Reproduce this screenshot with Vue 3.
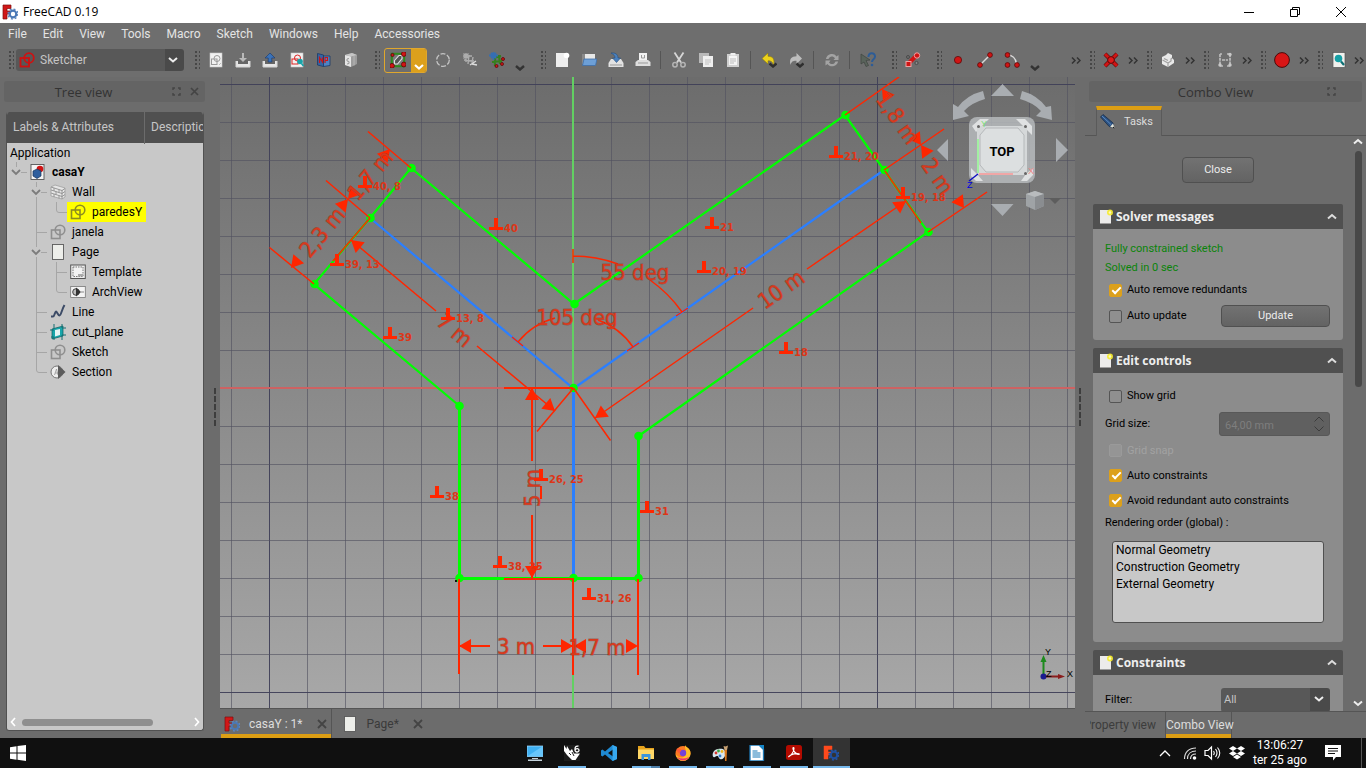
<script setup>
import { ref } from 'vue'

const dot = (x, y, r = 2.4) => `<circle cx="${x}" cy="${y}" r="${r}" fill="#d01414" stroke="#5a0a0a" stroke-width=".8"/>`
const chev = '<path d="M8.5 11.5l3.5 3 3.500-3" fill="none" stroke="#2e2e2e" stroke-width="2.400"/>'
const gear = (c, s) => `<circle cx="11" cy="10" r="3.300" fill="none" stroke="${c}" stroke-width="2.200"/><circle cx="11" cy="10" r="4.900" fill="none" stroke="${s}" stroke-width="1.500" stroke-dasharray="1.900 1.950"/>`
const sketchShape = (c, w = 1.6) => `<rect x="1.500" y="6" width="8.500" height="8.500" fill="none" stroke="${c}" stroke-width="${w}"/><circle cx="10" cy="6" r="4.800" fill="none" stroke="${c}" stroke-width="${w}"/>`
const paper = '<rect x="2" y="1" width="12" height="14" fill="#f1f1f1" stroke="#c9c9c9" stroke-width=".6"/>'
const tray = '<path d="M1 9v6h14V9" fill="#e6e6e6" stroke="#d5d5d5"/><path d="M3 8h10v4H3z" fill="#666"/>'

const icons = {
  freecad: `<path d="M1 1h8v3.500H5V7h3v3H5v5H1z" fill="#d11717" stroke="#7d0d0d" stroke-width=".7"/>${gear('#4a78b5', '#5c86bd')}`,
  freecadBar: `<path d="M1 1h8v3.500H5V7h3v3H5v4H1z" fill="#ff4a1c" stroke="#ff4a1c" stroke-width=".5"/>${gear('#1f4fa0', '#2456a8')}`,
  sketcher: sketchShape('#cf1111', 1.8),
  sketch: sketchShape('#8f8f8f'),
  sketchY: sketchShape('#8d8d20'),
  newSketch: `${paper}<rect x="3.500" y="7" width="5.500" height="5.500" fill="none" stroke="#999"/><circle cx="9" cy="6.500" r="3" fill="none" stroke="#999"/><path d="M11 13l2-2" stroke="#bbb"/>`,
  trayDown: `${tray}<path d="M7 1h2v5h3l-4 4-4-4h3z" fill="#b9b9b9"/>`,
  trayUp: `${tray}<path d="M6.200 10V6H3l5-5 5 5H9.800v4z" fill="#3a72b8" stroke="#1f3e70" stroke-width=".7"/>`,
  viewSketch: `${paper}<rect x="3" y="7" width="6" height="5" fill="none" stroke="#d22"/><circle cx="8.500" cy="6" r="3" fill="none" stroke="#d22"/><circle cx="11" cy="9.500" r="2.800" fill="#19a3a8"/><path d="M12.500 11.500l2 2.500" stroke="#19a3a8" stroke-width="1.800"/>`,
  viewSection: '<path d="M1.500 1.500l6 1.500v11.500l-6-1.500z" fill="#3465a4" stroke="#1c3a68" stroke-width=".8"/><path d="M7.500 4h6.500v9.500l-6.500 1z" fill="#4d83c4" stroke="#1c3a68" stroke-width=".8"/><path d="M3.500 11V5.500l3 4.500V5.500M9 11V5.500h2.500v3H9" stroke="#cf1414" stroke-width="1.200" fill="none"/>',
  mapSketch: '<path d="M2 3l7-2 5 2v9l-6 3-6-2z" fill="#9c9c9c"/><path d="M2 3l6 1.500V15l-6-2z" fill="#e5e5e5"/><path d="M2 3l7-2 5 2-6 1.500z" fill="#c6c6c6"/><path d="M11 4v9.500" stroke="#b5b5b5"/><path d="M6 6.500l-2 .5v2l2 .5v2l-2 .5" stroke="#999" fill="none"/>',
  boundary: `<rect x="1.800" y="1.800" width="12.400" height="12.400" fill="#7a7a7a" stroke="#2f8a1e" stroke-width="2"/><path d="M4.500 8.500L9 3.500h3v3L7.500 12h-3z" fill="#555" stroke="#e0e0e0" stroke-width="1.100"/>${dot(2, 13.800)}${dot(13.800, 2)}${dot(13.800, 12.500)}${dot(2.500, 3, 1.600)}`,
  dashCircle: '<circle cx="8" cy="8" r="6.300" fill="none" stroke="#c4c4c4" stroke-width="1.300" stroke-dasharray="5 1.600"/>',
  hashGrey: '<path d="M4 1v9M1 4h9M7 3l-1 9M2 8l10 1M11 5l-1 6M1.500 1.500l5 5M6.500 1.500l-5 5" stroke="#adadad" stroke-width="1.400" fill="none"/><path d="M8 13l6-4M10 12l5 1" stroke="#dcdcdc" stroke-width="1.300"/>',
  hashColor: '<path d="M4 6l8-2M3 10l10-1M6 3v11M10 3l1 9" stroke="#36801d" stroke-width="2.200"/><path d="M4.500 0v8M0 3.500h9M2 1l5 5M7 1L2 6" stroke="#356eb2" stroke-width="1.800"/>' + dot(14, 7, 1.500) + dot(13, 12, 1.500) + dot(7.500, 14, 1.500),
  newDoc: '<path d="M2 1h12v14H2z" fill="#eee"/><circle cx="12.500" cy="3.500" r="2.800" fill="#fff"/>',
  open: '<path d="M1 2h4l1 1h8v9H1z" fill="#8a8a8a"/><path d="M4 2h10v6H4z" fill="#e8e8e8"/><path d="M3 7h13l-1.500 6.500H1.500z" fill="#6d9fd6" stroke="#3f6fa8" stroke-width=".8"/>',
  save: '<path d="M3 7h10l2.500 4v4H.5v-4z" fill="#e2e2e2"/><path d="M2 13h12" stroke="#999"/><path d="M3 1c4-.5 7 1 7 5h2.500L8.500 10.500 4.500 6H7c0-2-1-3.500-4-5z" fill="#4a80bd" stroke="#274f80" stroke-width=".6"/>',
  print: '<path d="M4 1h8v7H4z" fill="#f1f1f1"/><path d="M3 8h10l2.500 2v4H.5v-4z" fill="#dedede"/><path d="M6.500 3v3h3V3M3 11h10" stroke="#999" fill="none"/>',
  cut: '<path d="M3.500 0.500l6.500 10M12.500.5L6 10.500" stroke="#d6d6d6" stroke-width="1.800"/><circle cx="4" cy="12.800" r="2.200" fill="none" stroke="#b5b5b5" stroke-width="1.500"/><circle cx="12" cy="12.800" r="2.200" fill="none" stroke="#b5b5b5" stroke-width="1.500"/>',
  copy: '<path d="M1 1h10v10H1z" fill="#b9b9b9"/><path d="M5 4h10v11H5z" fill="#efefef"/><path d="M7 8h6M7 10h6M7 12h4" stroke="#c2c2c2"/>',
  paste: '<path d="M2 2h12v13H2z" fill="#cfcfcf"/><path d="M4 4h8v9H4z" fill="#f4f4f4"/><path d="M5.500 1h5v2.500h-5z" fill="#eee"/><path d="M5 7h6M5 9h6M5 11h4" stroke="#bbb"/>',
  undo: '<path d="M1 6.500L7 1v3.300c5 0 7 3 5.500 9C11.500 9.500 10 8.700 7 8.800V12z" fill="#ecd21c" stroke="#8f7b00" stroke-width=".5"/>' + chev,
  redo: '<path d="M14 6.500L8.500 1v3.300C3.500 4.300 1 7 2.500 13 3.500 9.500 5 8.700 8.500 8.800V12z" fill="#bdbdbd"/>' + chev,
  refresh: '<path d="M2 7c.5-5 8-7 10.500-2.500L14.500 3v5H9.500l1.500-1.800C9 3.500 5.500 4 4.500 7zM14 9.500c-.5 5-8 6.500-10.500 2.500L1.500 13.500v-5h5L5 10.500c2 2.500 5.500 2 6.500-1z" fill="#a3a3a3"/>',
  whatsThis: '<path d="M1 2l9 6-4 .5 2.500 5L6 14.500 4 10l-3 2z" fill="#59635b" stroke="#3f4540" stroke-width=".7"/><path d="M8.500 5c0-5 6.500-5 6.500-.5 0 3-3 2.500-3 5.500" fill="none" stroke="#2d5c96" stroke-width="2"/><circle cx="12" cy="13" r="1.300" fill="#2d5c96"/>',
  constr: '<path d="M3 12l9-9" stroke="#d01414" stroke-width="4"/><rect x="1" y="9.500" width="5" height="5" fill="#d01414" stroke="#f0a0a0"/><circle cx="12" cy="3.500" r="2.700" fill="#d01414" stroke="#f0a0a0"/><circle cx="3" cy="5" r="1.500" fill="none" stroke="#4a4a4a"/><circle cx="11.500" cy="11" r="1.600" fill="#8a8a8a" stroke="#4a4a4a"/>',
  point: dot(8, 8, 3.600),
  line: '<path d="M3 13L13 3" stroke="#d9d9d9" stroke-width="1.500"/>' + dot(3, 13) + dot(13, 3),
  arc: '<path d="M3 3c5 0 9 3 9.500 9" fill="none" stroke="#d9d9d9" stroke-width="1.500"/>' + dot(3.500, 3) + dot(3.500, 13) + dot(13, 13),
  cross: '<path d="M2 2l12 12M14 2L2 14" stroke="#5a0a0a" stroke-width="4.200"/><path d="M2 2l12 12M14 2L2 14" stroke="#d01414" stroke-width="3"/><circle cx="8" cy="8" r="3.400" fill="#e01818" stroke="#5a0a0a"/>',
  solid: '<path d="M2 5l4-2 2-2 4 2v3l2 2v3l-6 4-6-3z" fill="#e9e9e9"/><path d="M8 15v-4l3-2V7l1-1M8 11L2.500 8M8 8.500L4 6.500" stroke="#a0a0a0" fill="none" stroke-width="1.200"/>',
  frame: '<path d="M3 2v12M13 2v12M3 14h3M10 14h3M3 2h2M10 2h3M5 8h6" stroke="#bdbdbd" stroke-width="1.700" fill="none" stroke-dasharray="3 .8"/><circle cx="3" cy="13" r="1.700" fill="#c8c8c8"/><circle cx="13" cy="2.500" r="1.700" fill="#c8c8c8"/><circle cx="13" cy="13" r="1.700" fill="#c8c8c8"/>',
  record: '<circle cx="8" cy="8" r="7.400" fill="#d81616" stroke="#3d0606" stroke-width=".9"/>',
  zoomDoc: '<rect x="2" y=".5" width="12" height="15" fill="#f1f1ee" stroke="#555" stroke-width=".7"/><circle cx="7.500" cy="6.500" r="3.800" fill="#16a0a6"/><path d="M10 9.500l3 3.500" stroke="#0d6f74" stroke-width="2.200"/>',
  docRoot: '<rect x="1" y=".5" width="13" height="15" fill="#f4f4f4" stroke="#555" stroke-width=".9"/><circle cx="10" cy="5" r="3.300" fill="#d01414"/><path d="M3 7l4-2 4 2v5l-4 2.500L3 12z" fill="#2f5f9e" stroke="#1a3458" stroke-width=".7"/>',
  wall: '<path d="M1 3l4-2 10 3v9l-3 2L1 12z" fill="#e6e6e6" stroke="#999" stroke-width=".7"/><path d="M1 6l11 3.500 3-2M1 9l11 3.500 3-2M1 3l11 3.500 3-2M4 4v3M9 5.500v3M6 7.500v3M4 10v3M9 11.500v3M12 6v9" stroke="#8f8f8f" stroke-width=".9" fill="none"/>',
  page: '<rect x="2.500" y=".5" width="11" height="15" fill="#edeeea" stroke="#5a5a5a" stroke-width=".9"/>',
  template: '<rect x=".7" y="1" width="14.600" height="13.500" fill="#ededed" stroke="#555"/><rect x="3" y="3" width="10" height="9.500" fill="#f2f2f2" stroke="#777" stroke-dasharray="1.500 1"/><path d="M8 10h5v2.500H8z" fill="#aaa"/>',
  archview: '<rect x=".7" y="2.500" width="14.600" height="11" fill="#f4f4f4" stroke="#777" stroke-width=".8"/><circle cx="6" cy="8" r="3.300" fill="#bbb" stroke="#444"/><path d="M6 3.500L11 8l-5 4.500z" fill="#333"/><path d="M11 8h3" stroke="#888"/>',
  polyline: '<path d="M1 12.500h2c1.500 0 2-5 3-5s2 4 3.500 4S12 5 14.500 1" fill="none" stroke="#3c4b66" stroke-width="2"/>',
  cutplane: '<path d="M2 5l11-3v10L2 15z" fill="#17a5aa" stroke="#0a5d60" stroke-width=".7"/><path d="M5 6l5-1v6l-5 1.500z" fill="#e4f4f4"/><path d="M0 6h4M12 4h4M1 13h3M12 11h4M4 0v5M12 0v4M4 13v3M12 11v5" stroke="#146e72" stroke-width="1"/>',
  section: '<circle cx="7" cy="8" r="6" fill="#eee" stroke="#777"/><path d="M4.500 11L6.500 5l1.500 6M5 9h3" stroke="#999" fill="none" stroke-width=".8"/><path d="M8 1l7.500 7L8 15z" fill="#5c5c5c"/>',
  pencil: '<path d="M.5 3L3 .5l10 8.500.8 4.500-4.600-1z" fill="#2c5282" stroke="#162d4d" stroke-width=".8"/><path d="M2 2l9 8.500" stroke="#5b8bc4"/><path d="M13 9.500l1.800 4.800-4.600-1.500z" fill="#e4e4d8"/><path d="M13.500 12.500l1.500 2-2.300-.8z" fill="#111"/>',
  star: '<path d="M2 1h11v13.500H2z" fill="#ecebea"/><circle cx="12" cy="3.500" r="3" fill="#f6ec2c" opacity=".9"/><circle cx="12" cy="3.500" r="1.300" fill="#fffbb8"/>',
  pc: '<rect x="0" y="1" width="16" height="10.500" fill="#3fb0f2" stroke="#aee0ff" stroke-width=".7"/><path d="M0 11.500L16 1v10.500z" fill="#68c6fb"/><path d="M5 13h6v1H5zM1 14.500h14V16H1z" fill="#c5d3dc"/>',
  rhino: '<rect x="0" y="0" width="16" height="16" fill="#1c1c1c"/><path d="M0 0l2.500 4 .5-3 3 5 2-2 2 4.500h6L11.500 15H8L3 10 0 6V0z" fill="#fff"/><path d="M5 8l2 2M8 7l2 4" stroke="#222"/><path d="M14.500 1.200c-3-.6-3.600 1.500-3.500 3.600 0 3 4 2.700 4 .5 0-2-3-2.200-3.800-.5" fill="none" stroke="#fff" stroke-width="1.300"/>',
  vscode: '<path d="M11.500 0L16 2v12l-4.500 2L4 9.500 1.500 11.500 0 10.500v-5l1.500-1L4 6.500zM12 4.500L7 8l5 3.500z" fill="#1f8ad2" fill-rule="evenodd"/><path d="M11.500 0L16 2v12l-4.500 2z" fill="#37a9f0"/>',
  explorer: '<path d="M0 1h6l1.500 2H16v11H0z" fill="#e6a21c"/><path d="M0 4.500h16V14H0z" fill="#ffd867"/><path d="M3.500 15V9h9v6H10v-3H6v3z" fill="#3d96dc"/>',
  firefox: '<circle cx="8" cy="8.500" r="7.500" fill="#ff7a22"/><path d="M10 0c1 3 6 3 5.500 9-.5 4-4 7-7.500 7S1 13 .5 9C3 13 8 14 10.500 10c2-4-1-5-.5-10z" fill="#ffbf26"/><path d="M2 12c3 5 10 4 12 0-4 2-8 2-12 0z" fill="#f0336b"/><circle cx="8" cy="8" r="3.200" fill="#7542d8"/><path d="M1.500 4c2-1 4-.5 5 1l-2 3c-2-.5-3-2-3-4z" fill="#ff5a36"/>',
  paint: '<path d="M6 4c5-1 8 1 7.500 5S10 15 8 14s-1-3-3-3-2 2-3.500 1S0 5 6 4z" fill="#d8e6ee"/><circle cx="4" cy="8" r="1.400" fill="#d93a2f"/><circle cx="6.500" cy="6" r="1.400" fill="#3aa83e"/><circle cx="10" cy="6.500" r="1.400" fill="#edb721"/><circle cx="8" cy="11" r="1.400" fill="#2f7bd3"/><path d="M12.500 5h2.500l-.5 11h-1.500z" fill="#d9781d"/><path d="M11.500 1l2 .5 2.500-1-1 4.500h-2.500z" fill="#c9a274"/>',
  writer: '<path d="M1 0h9l4.500 4.500V16H1z" fill="#fff" stroke="#1e78b4" stroke-width="1.300"/><path d="M10 0h5v5z" fill="#1586c8"/><path d="M3.500 6h5M3.500 8h8M3.500 10h8M3.500 12h8" stroke="#1778b8" stroke-width="1.100"/>',
  acrobat: '<rect x="0" y="0" width="16" height="15" rx="2.500" fill="#b30b00"/><path d="M3 11.500c2-1 5-5 5-8 0-1.500-1.500-1-1 .5.500 2 3 5.500 6 5.500 1.500-1-4-1.500-8 .5-2 1-3 2.500-2 1.500z" fill="none" stroke="#fff" stroke-width="1.100"/>'
}

const menus = ['File', 'Edit', 'View', 'Tools', 'Macro', 'Sketch', 'Windows', 'Help', 'Accessories']

const tools = [
  { k: 'handle' }, { i: 'newSketch' }, { i: 'trayDown' }, { i: 'trayUp' }, { i: 'viewSketch' }, { i: 'viewSection' }, { i: 'mapSketch' },
  { k: 'handle' }, { k: 'split', i: 'boundary' }, { i: 'dashCircle' }, { i: 'hashGrey' }, { i: 'hashColor' }, { k: 'more' },
  { k: 'handle' }, { i: 'newDoc' }, { i: 'open' }, { i: 'save' }, { i: 'print' }, { k: 'sep' }, { i: 'cut' }, { i: 'copy' }, { i: 'paste' },
  { k: 'sep' }, { i: 'undo' }, { i: 'redo' }, { k: 'sep' }, { i: 'refresh' }, { k: 'sep' }, { i: 'whatsThis' },
  { k: 'handle' }, { i: 'constr' }, { k: 'handle' }, { i: 'point' }, { i: 'line' }, { i: 'arc' }, { k: 'more' },
  { k: 'space' }, { k: 'ext' }, { k: 'tight' }, { i: 'cross' }, { k: 'ext' }, { k: 'tight' }, { i: 'solid' }, { k: 'ext' }, { k: 'tight' },
  { i: 'frame' }, { k: 'ext' }, { k: 'tight' }, { i: 'record' }, { k: 'ext' }, { k: 'tight' }, { i: 'zoomDoc' }, { k: 'ext' }
]

const tree = [
  { t: 'casaY', i: 'docRoot', w: 21, b: true, g: 'M10.500 0V5M15 10.500H21', c: 10 },
  { t: 'Wall', i: 'wall', w: 41, g: 'M30.500 0V5M30.500 15V20M35 10.500H41', c: 30 },
  { t: 'paredesY', i: 'sketchY', w: 61, sel: true, g: 'M30.500 0V20M50.500 0V8Q50.500 10.500 53 10.500H61' },
  { t: 'janela', i: 'sketch', w: 41, g: 'M30.500 0V20M30.500 10.500H41' },
  { t: 'Page', i: 'page', w: 41, g: 'M30.500 0V5M30.500 15V20M35 10.500H41', c: 30 },
  { t: 'Template', i: 'template', w: 61, g: 'M30.500 0V20M50.500 0V20M50.500 10.500H61' },
  { t: 'ArchView', i: 'archview', w: 61, g: 'M30.500 0V20M50.500 0V8Q50.500 10.500 53 10.500H61' },
  { t: 'Line', i: 'polyline', w: 41, g: 'M30.500 0V20M30.500 10.500H41' },
  { t: 'cut_plane', i: 'cutplane', w: 41, g: 'M30.500 0V20M30.500 10.500H41' },
  { t: 'Sketch', i: 'sketch', w: 41, g: 'M30.500 0V20M30.500 10.500H41' },
  { t: 'Section', i: 'section', w: 41, g: 'M30.500 0V8Q30.500 10.500 33 10.500H41' }
]

const gridX = Array.from({ length: 23 }, (_, n) => ({ p: 231.5 + n * 38, major: n === 1 || n === 17 }))
const gridY = Array.from({ length: 17 }, (_, n) => ({ p: 84.5 + n * 38, major: n === 0 || n === 16 }))

const nodes = [
  [411, 168], [370, 218], [314, 284], [574, 304], [573, 388], [459, 406], [459, 578],
  [573, 578], [638, 578], [638, 436], [928, 232], [884, 170], [845, 115]
]

const perps = [
  [489, 227, '40'], [358, 185, '40, 8'], [330, 263, '39, 13'], [441, 317, '13, 8'], [383, 336, '39'],
  [829, 155, '21, 20'], [705, 226, '21'], [697, 270, '20, 19'], [896, 196, '19, 18'], [779, 351, '18'],
  [430, 495, '38'], [534, 478, '26, 25'], [640, 510, '31'], [493, 565, '38, 25'], [582, 597, '31, 26']
]

/* arrow tips: x, y, direction in degrees */
const arrows = [
  [459, 646, 180], [573, 646, 0], [574, 646, 180], [638, 646, 0], [532, 388, -90], [532, 578, 90],
  [351, 240, 220], [555, 411, 40], [906, 201, -35], [595, 418, 145],
  [291, 268, 130], [348, 199, -50], [348, 199, 130], [390, 149, -50],
  [882, 89, 235], [921, 145, 55], [921, 145, 235], [964, 208, 55]
]

const dims = [
  [516, 646, 0, '3 m'], [597, 647, 0, '1,7 m'], [532, 488, -90, '5 m'], [455, 330, 40, '7 m'],
  [781, 289, -35, '10 m'], [322, 232, -50, '2,3 m'], [370, 175, -50, '1,7 m'],
  [898, 118, 55, '1,8 m'], [938, 176, 55, '2 m'], [577, 317, 0, '105 deg'], [635, 272, 0, '55 deg']
]

const autoRemove = ref(true)
const autoUpdate = ref(false)
const showGrid = ref(false)
const autoConstraints = ref(true)
const avoidRedundant = ref(true)

const apps = [
  { i: 'pc' }, { i: 'rhino', on: true }, { i: 'vscode' }, { i: 'explorer', on: true, multi: true }, { i: 'firefox', on: true },
  { i: 'paint', on: true }, { i: 'writer', on: true }, { i: 'acrobat', on: true }, { i: 'freecadBar', active: true }
]
</script>

<template>
  <div class="window">
    <header class="titlebar">
      <svg class="ic" viewBox="0 0 16 16" v-html="icons.freecad"></svg>
      <span class="apptitle">FreeCAD 0.19</span>
      <button class="winbtn" aria-label="Minimize"><svg width="12" height="12"><path d="M1 6.500h10" stroke="#000" /></svg></button>
      <button class="winbtn" aria-label="Restore"><svg width="12" height="12"><path d="M1.500 3.500h7v7h-7zM3.500 3.500v-2h7v7h-2" fill="none" stroke="#000" /></svg></button>
      <button class="winbtn" aria-label="Close window"><svg width="12" height="12"><path d="M1 1l10 10M11 1L1 11" stroke="#000" /></svg></button>
    </header>

    <nav class="menubar">
      <button v-for="m in menus" :key="m">{{ m }}</button>
    </nav>

    <div class="toolbar">
      <i class="dots"></i>
      <div class="workbench">
        <svg class="ic" viewBox="0 0 16 16" v-html="icons.sketcher"></svg>
        <select aria-label="Workbench"><option>Sketcher</option></select>
        <svg class="arrow" width="10" height="6"><path d="M1 1l4 3.500L9 1" fill="none" stroke="#eee" stroke-width="2" /></svg>
      </div>
      <template v-for="(t, n) in tools" :key="n">
        <span v-if="t.k === 'handle' || t.k === 'tight'" :class="['cell', t.k]"><i class="dots"></i></span>
        <i v-else-if="t.k === 'sep'" class="sep"></i>
        <i v-else-if="t.k === 'space'" class="space"></i>
        <button v-else-if="t.k === 'more'" class="more" aria-label="More"><svg width="10" height="6"><path d="M1 1l4 3.500L9 1" fill="none" stroke="#333" stroke-width="2.400" /></svg></button>
        <button v-else-if="t.k === 'ext'" class="ext" aria-label="Extend toolbar"><svg width="10" height="7"><path d="M1 .5l3 3-3 3M6 .5l3 3-3 3" fill="none" stroke="#333" stroke-width="1.500" /></svg></button>
        <button v-else-if="t.k === 'split'" class="split" aria-label="Validate">
          <span><svg class="ic" viewBox="0 0 16 16" v-html="icons[t.i]"></svg></span>
          <b><svg width="10" height="6"><path d="M1 1l4 3.500L9 1" fill="none" stroke="#fff" stroke-width="2.200" /></svg></b>
        </button>
        <button v-else class="tool" :aria-label="t.i"><svg class="ic" viewBox="0 0 16 16" v-html="icons[t.i]"></svg></button>
      </template>
    </div>

    <main class="workspace">
      <aside class="leftdock">
        <div class="docktitle">
          <span>Tree view</span>
          <svg width="9" height="9"><path d="M1 3V1h2M6 1h2v2M8 6v2H6M3 8H1V6" fill="none" stroke="#444" stroke-width="1.400" /></svg>
          <svg width="9" height="9"><path d="M1 1l7 7M8 1L1 8" stroke="#444" stroke-width="1.700" /></svg>
        </div>
        <div class="treebox">
          <div class="treehead"><span>Labels &amp; Attributes</span><span>Description</span></div>
          <ul class="tree">
            <li class="root">Application</li>
            <li v-for="r in tree" :key="r.t">
              <svg class="guide" :width="r.w" height="20">
                <path :d="r.g" fill="none" stroke="#a6a6a6" />
                <path v-if="r.c" :d="`M${r.c - 4} 8l4 4 4-4`" fill="none" stroke="#7c7c7c" stroke-width="1.800" />
              </svg>
              <span :class="['node', { sel: r.sel, bold: r.b }]"><svg class="ic" viewBox="0 0 16 16" v-html="icons[r.i]"></svg>{{ r.t }}</span>
            </li>
          </ul>
          <div class="hscroll">
            <svg width="6" height="10"><path d="M5 1L1.500 5 5 9" fill="none" stroke="#fff" stroke-width="1.700" /></svg>
            <div class="track"><i></i></div>
            <svg width="6" height="10"><path d="M1 1l3.500 4L1 9" fill="none" stroke="#fff" stroke-width="1.700" /></svg>
          </div>
        </div>
        <i class="grip"></i>
      </aside>

      <section class="center">
        <svg class="canvas" viewBox="220 77 855 631" preserveAspectRatio="xMidYMid slice">
          <g shape-rendering="crispEdges">
            <line v-for="g in gridX" :key="'x' + g.p" :x1="g.p" :x2="g.p" y1="77" y2="708" :class="g.major ? 'major' : 'minor'" />
            <line v-for="g in gridY" :key="'y' + g.p" x1="220" x2="1075" :y1="g.p" :y2="g.p" :class="g.major ? 'major' : 'minor'" />
            <path d="M220 388H1075" stroke="#cd6262" stroke-width="2" />
            <path d="M573 77V708" stroke="#62d062" stroke-width="2" />
          </g>

          <g class="blue">
            <path d="M370 218L573.500 388.500L884 170" stroke-width="2.200" />
            <path d="M573.500 388V578" stroke-width="3" />
          </g>
          <g class="green">
            <path d="M459.500 406L314 284L370 218L411 168L574 304L845 115L884 170L928 232L638.500 436" stroke-width="2.200" />
            <path d="M459.500 406V578.500H638.500V436" stroke-width="3" />
          </g>
          <circle v-for="(p, n) in nodes" :key="'n' + n" :cx="p[0] + .5" :cy="p[1]" r="4.300" fill="#00ff00" />
          <rect x="455" y="580" width="2" height="2" fill="#111" />

          <g class="red" stroke-width="1.500">
            <path d="M411 168L368 131.500M370 218L326 180.500M314 284L269.500 247.500M845 115L899 77M884 170L944 129M928 232L987 192" />
            <path d="M370 218L333 261M573.500 388L537 431.500M885 171L921 223M573.500 388L610.500 440.500" />
            <path d="M351 240L436 311M477 346L555 411M906 201L807 269M753 308L595 418" />
            <path d="M573 256A132 132 0 0 1 618 264M650 280A132 132 0 0 1 682 312M573 249V263M676 316L688 308" />
            <path d="M518 342A72 72 0 0 1 555 318M598 320A72 72 0 0 1 633 347M512 337L523 346M627 351L639 343" />
          </g>
          <g class="red" stroke-width="2" shape-rendering="crispEdges">
            <path d="M459 579V674M573 578V675M638 579V675M504 388H573M504 579H573M532 389V461M532 515V578M460 646H490M543 646H573" />
            <path d="M541 486V499" />
          </g>
          <path v-for="(a, n) in arrows" :key="'a' + n" d="M0 0L-12 -7V7Z" fill="#ff2600" :transform="`translate(${a[0]} ${a[1]}) rotate(${a[2]})`" />
          <text v-for="(d, n) in dims" :key="'d' + n" class="dim" :transform="`translate(${d[0]} ${d[1]}) rotate(${d[2]})`" y="8">{{ d[3] }}</text>
          <g v-for="(p, n) in perps" :key="'p' + n" :transform="`translate(${p[0]} ${p[1]})`">
            <path d="M5 -9h4v9h5v3H0V0h5z" fill="#ff2600" />
            <text class="cid" x="15" y="5">{{ p[2] }}</text>
          </g>

          <g fill="#a9adb1">
            <path d="M1002.500 84L1014 96H991zM937 150l11-11v22zM1068 150l-12-12v24zM1002.500 216L991 204h22.500z" />
            <path d="M983 91l2 8q-14 4-21 12l5 5-16 4 0-16 5 3q9-12 25-16z" />
            <path d="M1022 91l-2 8q14 4 21 12l-5 5 16 4-1-14-5 1q-9-12-24-16z" />
          </g>
          <rect x="969" y="117" width="66" height="66" rx="8" fill="#b9bdbf" fill-opacity=".82" />
          <path d="M972 126l8-7 9 0-13 13zM1016 119h9l7 7v9zM971 168l6 6 6 7h-7l-5-5zM1033 168l-7 6-5 7h6l6-6z" fill="#dfe1e2" />
          <rect x="977" y="126" width="50" height="49" rx="2" fill="#d5d8d9" />
          <path d="M986 128h32l6 7v30l-6 7h-32l-6-7v-30z" fill="#dcdfe0" stroke="#b5b8ba" />
          <path d="M978 139V173" stroke="#a2f0a2" stroke-width="2" />
          <path d="M979 174H1013" stroke="#f0a6a6" stroke-width="2" />
          <path d="M978 174l-9 7" stroke="#1010c0" stroke-width="1.500" />
          <g fill="#666"><circle cx="978.500" cy="126.500" r="1.500" /><circle cx="1025.500" cy="126.500" r="1.500" /><circle cx="1025.500" cy="173.500" r="1.500" /></g>
          <text class="cube" x="1002" y="156">TOP</text>
          <text class="axis" x="967" y="188" fill="#0000e0">Z</text>
          <text class="axis" x="981" y="127" fill="#7be07b">Y</text>
          <text class="axis" x="1028" y="174" fill="#ea8585">X</text>
          <path d="M1026 194l9-3 9 3v12l-9 4-9-4z" fill="#9fa3a6" />
          <path d="M1026 194l9 3 9-3-9-3z" fill="#b9bcbe" />
          <path d="M1035 197v13l9-4v-12z" fill="#8a8d90" />
          <path d="M1049 198h12l-6 6z" fill="#5d5d5d" />

          <path d="M1043.500 676V660" stroke="#1d8a1d" stroke-width="2" />
          <path d="M1043.500 655l3 7h-6z" fill="#1d8a1d" />
          <path d="M1044 676.500H1058" stroke="#8a1d1d" stroke-width="2" />
          <path d="M1065 676.500l-7-2.500v5z" fill="#8a1d1d" />
          <circle cx="1043.500" cy="676.500" r="3" fill="#1c1c90" />
          <text class="axis" x="1045" y="655">Y</text>
          <text class="axis" x="1046" y="677">Z</text>
          <text class="axis" x="1067" y="677">X</text>
        </svg>
        <div class="doctabs">
          <div class="doctab on">
            <svg class="ic" viewBox="0 0 16 16" v-html="icons.freecad"></svg><span>casaY : 1*</span>
            <button aria-label="Close casaY"><svg width="10" height="10"><path d="M1 1l8 8M9 1L1 9" stroke="#444" stroke-width="1.800" /></svg></button>
          </div>
          <div class="doctab">
            <svg class="ic" viewBox="0 0 16 16" v-html="icons.page"></svg><span>Page*</span>
            <button aria-label="Close Page"><svg width="10" height="10"><path d="M1 1l8 8M9 1L1 9" stroke="#444" stroke-width="1.800" /></svg></button>
          </div>
        </div>
      </section>

      <aside class="rightdock">
        <i class="grip"></i>
        <div class="docktitle combo">
          <span>Combo View</span>
          <svg width="9" height="9"><path d="M1 3V1h2M6 1h2v2M8 6v2H6M3 8H1V6" fill="none" stroke="#444" stroke-width="1.400" /></svg>
        </div>
        <div class="tasktabs">
          <button class="tasktab"><svg class="ic" viewBox="0 0 16 16" v-html="icons.pencil"></svg>Tasks</button>
        </div>
        <div class="taskarea">
          <div class="panels">
            <button class="btn close">Close</button>

            <section class="panel">
              <h2><svg class="ic" viewBox="0 0 16 16" v-html="icons.star"></svg><span>Solver messages</span><svg width="10" height="7"><path d="M1 5.500l4-3.500 4 3.500" fill="none" stroke="#ddd" stroke-width="2" /></svg></h2>
              <div class="body solver">
                <p class="ok">Fully constrained sketch</p>
                <p class="ok">Solved in 0 sec</p>
                <div class="row r26"><label><input v-model="autoRemove" type="checkbox">Auto remove redundants</label></div>
                <div class="row r26"><label><input v-model="autoUpdate" type="checkbox">Auto update</label><button class="btn update">Update</button></div>
              </div>
            </section>

            <section class="panel">
              <h2><svg class="ic" viewBox="0 0 16 16" v-html="icons.star"></svg><span>Edit controls</span><svg width="10" height="7"><path d="M1 5.500l4-3.500 4 3.500" fill="none" stroke="#ddd" stroke-width="2" /></svg></h2>
              <div class="body edit">
                <div class="row r26"><label><input v-model="showGrid" type="checkbox">Show grid</label></div>
                <div class="row r29">
                  <label class="plain" for="gridsize">Grid size:</label>
                  <div class="spin"><input id="gridsize" type="text" value="64,00 mm" disabled><svg width="12" height="18"><path d="M1.500 6.500L6 2l4.500 4.500M1.500 11.500L6 16l4.500-4.500" fill="none" stroke="#3c3c3c" /></svg></div>
                </div>
                <div class="row"><label class="off"><input type="checkbox" disabled>Grid snap</label></div>
                <div class="row"><label><input v-model="autoConstraints" type="checkbox">Auto constraints</label></div>
                <div class="row"><label><input v-model="avoidRedundant" type="checkbox">Avoid redundant auto constraints</label></div>
                <p class="order">Rendering order (global) :</p>
                <ul class="list"><li>Normal Geometry</li><li>Construction Geometry</li><li>External Geometry</li></ul>
              </div>
            </section>

            <section class="panel">
              <h2><svg class="ic" viewBox="0 0 16 16" v-html="icons.star"></svg><span>Constraints</span><svg width="10" height="7"><path d="M1 5.500l4-3.500 4 3.500" fill="none" stroke="#ddd" stroke-width="2" /></svg></h2>
              <div class="body filter">
                <label class="plain" for="filter">Filter:</label>
                <div class="combo-box"><select id="filter"><option>All</option></select><svg class="arrow" width="10" height="6"><path d="M1 1l4 3.500L9 1" fill="none" stroke="#eee" stroke-width="2" /></svg></div>
              </div>
            </section>
          </div>
          <div class="vscroll">
            <svg width="10" height="7"><path d="M1 5.500L5 2l4 3.500" fill="none" stroke="#eee" stroke-width="2" /></svg>
            <div class="vtrack"><i></i></div>
            <svg width="10" height="7"><path d="M1 1.500L5 5l4-3.500" fill="none" stroke="#eee" stroke-width="2" /></svg>
          </div>
        </div>
        <div class="viewtabs"><button class="prop"><span>Property view</span></button><button class="on">Combo View</button></div>
      </aside>
    </main>

    <footer class="taskbar">
      <button class="start" aria-label="Start"><svg width="16" height="16"><path d="M0 2.300L6.500 1.300V7.500H0zM7.500 1.100L16 0v7.500H7.500zM0 8.500h6.500v6.200L0 13.800zM7.500 8.500H16V16l-8.500-1.200z" fill="#fff" /></svg></button>
      <div class="apps">
        <button v-for="a in apps" :key="a.i" :class="['app', { on: a.on, multi: a.multi, active: a.active }]" :aria-label="a.i"><svg class="ic" viewBox="0 0 16 16" v-html="icons[a.i]"></svg></button>
      </div>
      <div class="tray">
        <svg width="12" height="16"><path d="M1 11l5-5 5 5" fill="none" stroke="#fff" stroke-width="1.300" /></svg>
        <svg class="wifi" width="14" height="14"><g fill="none" stroke="#ddd" stroke-width="1.200"><path d="M1.500 13C1.500 6 6 2 13 2M4.500 13C4.500 8 8 5 13 5M7.500 13c0-3 2-5 5.500-5" /></g><circle cx="11.500" cy="12" r="1.800" fill="#fff" /></svg>
        <svg class="vol" width="17" height="16"><path d="M1 5.500h3L7.500 2v12L4 10.500H1z" fill="none" stroke="#fff" stroke-width="1.200" /><path d="M9.500 6q1.500 2 0 4M11.500 4q3 4 0 8M13.500 2.500q4.500 5.500 0 11" fill="none" stroke="#fff" stroke-width="1.100" /></svg>
        <svg class="drop" width="16" height="14"><path d="M4 0l4 2.500L4 5 0 2.500zM12 0l4 2.500L12 5 8 2.500zM4 5l4 2.500L4 10 0 7.500zM12 5l4 2.500-4 2.500-4-2.500zM8 8.500l4 2.500-4 2.500L4 11z" fill="#fff" /></svg>
        <div class="clock"><span>13:06:27</span><span>ter 25 ago</span></div>
        <svg class="note" width="16" height="16"><path d="M0 0h16v12H11l-3 3.500V12H0z" fill="#fff" /><path d="M3 3.500h10M3 6h10M3 8.500h7" stroke="#111" /></svg>
        <i class="peek"></i>
      </div>
    </footer>
  </div>
</template>

<style>
html, body { margin: 0; background: #6c6c6c; }
</style>

<style scoped>
.window {
  height: 100vh;
  display: flex;
  flex-direction: column;
  overflow: hidden;
  background: #6c6c6c;
  color: #000;
  font: 12px/16px Roboto, "Noto Sans", sans-serif;
}
.window * { box-sizing: border-box; }
button, select, input { font: inherit; color: inherit; border: 0; margin: 0; padding: 0; background: none; }
svg { flex: none; display: block; }
ul, p, h2 { margin: 0; padding: 0; list-style: none; }
.ic { width: 16px; height: 16px; }

.titlebar { height: 23px; flex: none; display: flex; align-items: center; background: #fff; padding-left: 2px; }
.apptitle { flex: 1; padding-left: 5px; font-family: "Open Sans", sans-serif; }
.winbtn { width: 46px; height: 23px; display: grid; place-items: center; }
.titlebar .winbtn:last-child { margin-right: 2px; }
.menubar { height: 22px; flex: none; display: flex; gap: 16px; padding-left: 8px; color: #e4e4e4; background: #6e6e6e; }

.toolbar { height: 32px; flex: none; display: flex; align-items: center; padding: 0 0 2px 8px; overflow: hidden; background: #6e6e6e; }
.toolbar > * { flex: none; }
.dots { width: 6px; height: 21px; background: radial-gradient(circle, #474747 1px, transparent 1px) 0 0 / 4px 4px; }
.workbench { position: relative; width: 168px; height: 22px; margin-left: 2px; display: flex; align-items: center; background: linear-gradient(to right, #585858 149px, #4a4a4a 149px); border-radius: 3px; padding-left: 3px; }
.workbench select { flex: 1; height: 22px; appearance: none; padding-left: 5px; color: #c4c4c4; }
.arrow { position: absolute; right: 6px; top: 8px; pointer-events: none; }
.cell { height: 21px; display: flex; justify-content: flex-end; padding-right: 2px; }
.handle { width: 18px; }
.tight { width: 13px; }
.sep { width: 9px; height: 18px; background: linear-gradient(#555, #555) center / 1px 100% no-repeat; }
.toolbar > .space { flex: 1; }
.tool { width: 27px; height: 24px; display: grid; place-items: center; }
.more { width: 20px; height: 24px; display: flex; justify-content: center; align-items: flex-end; padding-bottom: 1px; }
.ext { width: 17px; height: 24px; display: grid; place-items: center; }
.toolbar > .ext:last-child { width: 14px; }
.split { width: 43px; height: 25px; margin: 0 2px; display: flex; border: 1px solid #e0a72d; border-radius: 3px; overflow: hidden; }
.split span { width: 26px; height: 23px; display: grid; place-items: center; }
.split b { flex: 1; height: 23px; background: #dca01c; display: flex; justify-content: center; align-items: flex-end; padding-bottom: 2px; }

.workspace { flex: 1; min-height: 0; display: flex; }
.leftdock { position: relative; width: 220px; flex: none; display: flex; flex-direction: column; padding: 4px 15px 7px 4px; }
.docktitle { height: 21px; flex: none; display: flex; align-items: center; gap: 9px; padding-right: 6px; background: #646464; border-radius: 3px; color: #333; font: 13px/18px "Open Sans", "Noto Sans", sans-serif; }
.docktitle span { flex: 1; text-align: center; }
.treebox { flex: 1; min-height: 0; margin: 10px 1px 0 2px; display: flex; flex-direction: column; background: #c8c8c8; border: 1px solid #515151; border-top: 0; border-radius: 3px; overflow: hidden; }
.treehead { height: 31px; flex: none; display: flex; align-items: center; background: #505050; color: #c6c6c6; }
.treehead span { line-height: 33px; padding-left: 6px; white-space: nowrap; }
.treehead span:first-child { width: 138px; flex: none; border-right: 1px solid #6c6c6c; }
.tree { flex: 1; }
.root { height: 19px; line-height: 20px; padding-left: 3px; }
.tree li:not(.root) { height: 20px; display: flex; margin-left: -1px; }
.node { height: 20px; display: flex; align-items: center; gap: 6px; padding: 0 4px 0 3px; }
.sel { background: #ff0; }
.bold { font-weight: 700; }
.hscroll { height: 16px; flex: none; display: flex; align-items: center; gap: 6px; padding: 0 3px; }
.track { flex: 1; height: 7px; }
.track i { display: block; width: 79%; height: 7px; border-radius: 4px; background: #8f8f8f; }
.grip { position: absolute; right: 4px; top: 311px; width: 2px; height: 40px; background: repeating-linear-gradient(to bottom, #3d3d3d 0 6px, transparent 6px 8px); }

.center { flex: 1; min-width: 0; display: flex; flex-direction: column; }
.canvas { flex: 1; min-height: 0; width: 100%; background: linear-gradient(#6c6c6c, #a8a8a8); }
.minor { stroke: #505060; stroke-opacity: .62; }
.major { stroke: #404058; stroke-opacity: .95; }
.blue { stroke: #2b7fff; fill: none; }
.green { stroke: #00ff00; fill: none; }
.red { stroke: #ff2600; fill: none; }
.dim { font: 22px "DejaVu Sans Condensed", "DejaVu Sans", sans-serif; text-anchor: middle; fill: #d8391c; stroke: #8c4030; stroke-width: 1px; stroke-opacity: .6; paint-order: stroke; }
.cid { font: 700 11px "DejaVu Sans Condensed", "DejaVu Sans", sans-serif; fill: #dc3618; }
.cube { font: 700 13px Roboto, sans-serif; text-anchor: middle; }
.axis { font: 9px "Liberation Sans", sans-serif; }
.doctabs { height: 30px; flex: none; display: flex; border-top: 1px solid #555; }
.doctab { display: flex; align-items: center; padding: 0 4px 0 10px; color: #3a3a3a; }
.doctab span { padding: 0 14px 0 9px; }
.doctab.on { margin-left: 1px; padding-left: 3px; color: #ddd; border-right: 1px solid #555; box-shadow: inset 0 -4px #dc9e14; }

.rightdock { position: relative; width: 291px; flex: none; display: flex; flex-direction: column; padding: 4px 0 0 10px; }
.rightdock .grip { right: auto; left: 4px; }
.combo { margin: 0 4px; padding-right: 26px; }
.combo span { padding-left: 24px; }
.tasktabs { height: 34px; flex: none; padding: 4px 0 0 11px; border-bottom: 1px solid #555; }
.tasktab { width: 66px; height: 30px; display: flex; align-items: center; gap: 8px; padding: 0 0 3px 3px; border: 1px solid #5a5a5a; border-top: 4px solid #dc9e14; border-bottom: 0; background: #6c6c6c; color: #ddd; font-size: 11px; }
.taskarea { flex: 1; min-height: 0; display: flex; font-size: 11px; }
.panels { flex: 1; min-width: 0; overflow: hidden; padding: 21px 7px 0 8px; }
.btn { display: block; border: 1px solid #505050; border-radius: 4px; background: linear-gradient(#727272, #636363); color: #ececec; text-align: center; font-size: 11px; }
.close { width: 72px; height: 26px; margin: 0 auto 21px; }
.panel { margin-bottom: 8px; }
.panel h2 { height: 25px; display: flex; align-items: center; gap: 2px; padding: 0 6px 0 5px; background: #505050; color: #eee; border-radius: 2px 2px 0 0; font: 700 12px/16px "Open Sans", "Noto Sans", sans-serif; }
.panel h2 span { flex: 1; }
.body { background: #8c8c8c; border-radius: 0 0 3px 3px; padding: 10px 13px 11px 12px; }
.ok { color: #0a840a; height: 19px; line-height: 19px; }
.row { height: 25px; display: flex; align-items: center; justify-content: space-between; }
.r26 { height: 26px; }
.r29 { height: 29px; }
.row label { display: flex; align-items: center; gap: 5px; padding-left: 4px; white-space: nowrap; }
.row label.plain { padding-left: 0; }
.row .off { color: #a2a2a2; }
input[type="checkbox"] { appearance: none; width: 13px; height: 13px; border: 1px solid #555; border-radius: 2px; background: #8f8f8f; }
input[type="checkbox"]:disabled { background: #959595; border-color: #9a9a9a; }
input[type="checkbox"]:checked { border-color: #dca01c; background: #dca01c; position: relative; }
input[type="checkbox"]:checked::after { content: ""; position: absolute; left: 2px; top: 2px; width: 7px; height: 3px; border: solid #fff; border-width: 0 0 2px 2px; transform: rotate(-45deg); }
.update { width: 109px; height: 22px; }
.spin { width: 111px; height: 24px; display: flex; align-items: center; background: #606060; border: 1px solid #585858; border-radius: 3px; padding-right: 4px; }
.spin input { flex: 1; min-width: 0; padding: 5px 0 0 5px; color: #7e7e7e; }
.edit { padding-bottom: 19px; }
.order { height: 20px; line-height: 20px; }
.list { height: 82px; margin: 8px 6px 0 7px; padding: 0 3px; border: 1px solid #505050; border-radius: 3px; background: #c8c8c8; font-size: 12px; line-height: 17px; }
.filter { display: flex; align-items: center; justify-content: space-between; padding-top: 13px; padding-bottom: 30px; }
.combo-box { position: relative; width: 109px; height: 24px; background: linear-gradient(to right, #585858 89px, #4a4a4a 89px); border-radius: 3px; }
.combo-box select { width: 100%; height: 24px; appearance: none; padding-left: 3px; color: #c4c4c4; }
.vscroll { width: 16px; flex: none; display: flex; flex-direction: column; align-items: center; padding: 2px 0 4px; }
.vtrack { flex: 1; padding-top: 6px; }
.vtrack i { display: block; width: 7px; height: 43%; border-radius: 4px; background: #484848; }
.viewtabs { height: 27px; flex: none; display: flex; border-top: 1px solid #555; }
.viewtabs button { width: 67px; color: #ddd; white-space: nowrap; }
.viewtabs .prop { width: 80px; color: #3c3c3c; overflow: hidden; padding-left: 5px; }
.viewtabs .prop span { display: flex; justify-content: flex-end; overflow: hidden; margin-right: 9px; }
.viewtabs .on { border: solid #555; border-width: 0 1px; box-shadow: inset 0 -4px #dc9e14; }

.taskbar { height: 30px; flex: none; display: grid; grid-template-columns: 1fr auto 1fr; background: #101010; color: #fff; }
.start { width: 36px; display: grid; place-items: center; }
.apps { display: flex; }
.app { width: 37px; height: 30px; display: grid; place-items: center; }
.on.app { background: linear-gradient(#76b9ed, #76b9ed) 4px 28px / 28px 2px no-repeat; }
.multi.app { background: linear-gradient(to right, #76b9ed 19px, #4d7ea8 19px) 4px 28px / 28px 2px no-repeat; }
.active.app { background: linear-gradient(#333 28px, #76b9ed 28px); }
.tray { display: flex; justify-content: flex-end; align-items: center; }
.wifi { margin-left: 12px; }
.vol { margin-left: 7px; }
.drop { margin-left: 8px; }
.clock { width: 70px; display: flex; flex-direction: column; text-align: center; line-height: 15px; }
.note { margin-left: 10px; }
.peek { width: 5px; height: 30px; margin-left: 20px; border-left: 1px solid #555; }
</style>
